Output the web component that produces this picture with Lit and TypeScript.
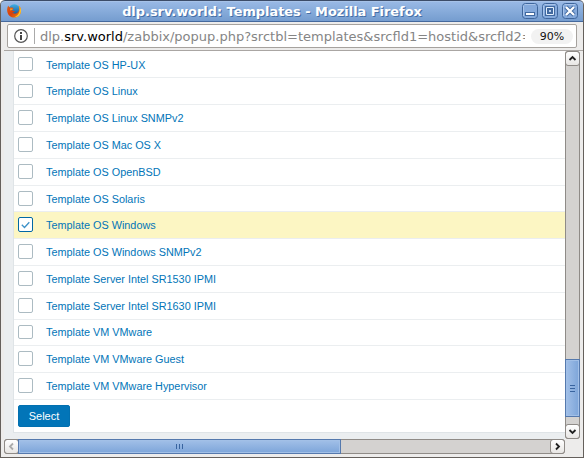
import { LitElement, html, css, svg } from "lit";
import { customElement } from "lit/decorators.js";
import { classMap } from "lit/directives/class-map.js";
import { styleMap } from "lit/directives/style-map.js";

interface Row { name: string; height: number; checked?: boolean; boxTop?: number; boxHeight?: number; textTop?: number; }

const ROWS: Row[] = [
  { name: "Template OS HP-UX", height: 27, boxTop: 6, boxHeight: 14, textTop: 8 },
  { name: "Template OS Linux", height: 27, boxTop: 6, boxHeight: 14 },
  { name: "Template OS Linux SNMPv2", height: 27 },
  { name: "Template OS Mac OS X", height: 27 },
  { name: "Template OS OpenBSD", height: 27 },
  { name: "Template OS Solaris", height: 26 },
  { name: "Template OS Windows", height: 27, checked: true },
  { name: "Template OS Windows SNMPv2", height: 27 },
  { name: "Template Server Intel SR1530 IPMI", height: 27 },
  { name: "Template Server Intel SR1630 IPMI", height: 27 },
  { name: "Template VM VMware", height: 26, boxHeight: 14, textTop: 6 },
  { name: "Template VM VMware Guest", height: 27 },
  { name: "Template VM VMware Hypervisor", height: 27 },
];

const firefox = svg`
  <defs>
    <linearGradient id="globe" x1="0" y1="0" x2="0" y2="1"><stop offset="0" stop-color="#3fb0e4"/><stop offset="1" stop-color="#174a8c"/></linearGradient>
    <linearGradient id="fox" x1="0" y1="0" x2="1" y2="1"><stop offset="0" stop-color="#e05a10"/><stop offset=".5" stop-color="#d8400c"/><stop offset="1" stop-color="#e88a18"/></linearGradient>
  </defs>
  <circle cx="7.300" cy="6" r="5.800" fill="url(#globe)"/>
  <path d="M1.200 1.600C.1 4 0 6 .3 7.800C1 11.500 4 13.600 7.300 13.600C11.300 13.600 14 10.500 14 7C14 4.500 13.200 2.600 11.700 1.500C12.500 4 12.500 6.500 11 8.300C9.500 10.200 6.500 10 5.300 8.300C6.500 8.600 7.500 8 8 7.300C6.500 7 5 7 5 5.800L6.700 4.600C6 3.600 4.500 3.400 3.400 3.700C2.300 3.200 1.500 2.500 1.200 1.600Z" fill="url(#fox)"/>
  <path d="M11.700 1.500C14.300 3.600 14.600 7.500 13.200 10C12 12.200 9.500 13.500 7 13.300C10.500 12 12.700 9 12.500 5.500C12.500 4 12.200 2.500 11.700 1.500Z" fill="#fbc52d"/>
  <path d="M3.200 4.300L6.300 4.700L5 5.900L3 6.500Z" fill="#f49a25"/>`;

@customElement("app-root")
export class AppRoot extends LitElement {
  static styles = css`
    :host { display: block; width: 584px; height: 458px; overflow: hidden; font-family: "Liberation Sans", Arial, sans-serif; }
    * { box-sizing: border-box; }
    svg { display: block; flex: none; }
    .window { display: flex; flex-direction: column; height: 458px; background: #edeceb; border: 1px solid #65605c; border-top: 0; border-radius: 5px 5px 0 0; overflow: hidden; }
    .title { display: flex; align-items: center; height: 22px; flex: none; margin: 0 -1px; padding: 0 5px 0 6px; background: linear-gradient(#9abae6, #759dcf); border: 1px solid #466a9e; border-top-color: #3c4c68; border-radius: 5px 5px 0 0; box-shadow: inset 0 1px #a6c2e8; }
    .caption { flex: 1; padding-top: 1px; text-align: center; white-space: nowrap; color: #fff; font: bold 12.900px/18px "DejaVu Sans", sans-serif; text-shadow: 1px 1px #456fa7; }
    .controls { display: flex; gap: 4px; }
    .url { display: flex; align-items: center; flex: none; width: 570px; height: 24px; margin: 2px 0 0 6px; padding: 0 3px 0 6px; background: #fff; border: 1px solid #a6a29e; border-radius: 2px; }
    .rule { width: 1px; height: 16px; background: #aaa; margin: 0 5px 0 6px; }
    .address { width: 485px; padding-top: 1px; overflow: hidden; white-space: nowrap; color: #858585; font: 13px/20px "DejaVu Sans", sans-serif; }
    .address b { font-weight: normal; color: #000; }
    .zoom { width: 42px; height: 15px; margin-left: auto; border-radius: 8px; background: #f2f2f2; color: #111; text-align: center; font: 11px/15px "DejaVu Sans", sans-serif; }
    .view { display: grid; grid-template-columns: 561px 15px; grid-template-rows: 388px 15px; margin: 2px 0 0 3px; border-top: 1px solid #aaa6a3; }
    .page { padding-left: 9px; background: #ebeef0; overflow: hidden; }
    .list { height: 382px; background: #fff; border-left: 1px solid #dfe4e7; border-bottom: 1px solid #dfe4e7; }
    .row { display: flex; align-items: flex-start; padding: 0 0 0 4px; border-bottom: 1px solid #ebeef0; color: #0275b8; font-size: 10.850px; line-height: 13px; }
    .picked { background: #fcf6c3; }
    .check { display: grid; place-items: center; width: 15px; margin-right: 13px; border: 1px solid #acbbc2; border-radius: 2px; background: #fff; }
    .picked .check { border-color: #0268a5; }
    .select { display: block; width: 52px; height: 22px; margin: 5px 0 0 4px; padding: 0; border: 1px solid #0270b0; border-radius: 2px; background: #0275b8; color: #fff; font: 11px/20px "Liberation Sans", sans-serif; }
    .bar { display: flex; background: #d4d2d0; border: 1px solid #8f8b87; border-radius: 3px; }
    .vertical { flex-direction: column; height: 388px; }
    .horizontal { height: 15px; width: 561px; }
    .arrow { display: grid; place-items: center; flex: none; width: 13px; height: 13px; background: linear-gradient(#fff, #e8e6e4); outline: 1px solid #8f8b87; border-radius: 2px; }
    .thumb { display: grid; place-items: center; border: 1px solid #5579ad; box-shadow: inset 0 0 0 1px #a2c0e7; }
    .vertical .thumb { width: 15px; height: 58px; margin: 294px 0 auto -1px; background: linear-gradient(90deg, #a2c0e8, #7da5d9); }
    .horizontal .thumb { width: 323px; height: 15px; margin: -1px auto 0 0; background: linear-gradient(#a2c0e8, #7da5d9); }
  `;

  private arrow(angle: number, color = "#222") {
    return html`<span class="arrow"><svg width="9" height="9" viewBox="-4.5 -4.5 9 9"><path transform="rotate(${angle})" d="M-3 1.500L0 -1.500L3 1.500" fill="none" stroke=${color} stroke-width="1.800"/></svg></span>`;
  }

  private control(glyph: unknown) {
    return html`<svg width="16" height="16"><rect x=".5" y=".5" width="15" height="15" rx="3" fill="#84a9db" stroke="#3f669c"/><path d="M2.500 1.500H13.500M1.500 2.500V13" stroke="#a9c4e9"/>${glyph}</svg>`;
  }

  render() {
    return html`<div class="window">
      <header class="title">
        <svg width="15" height="14" viewBox="0 0 15 14">${firefox}</svg>
        <span class="caption">dlp.srv.world: Templates - Mozilla Firefox</span>
        <div class="controls">
          ${this.control(svg`<rect x="3.500" y="9.500" width="9" height="3" fill="#fff" stroke="#41699f"/>`)}
          ${this.control(svg`<path d="M4.500 4.500H11.500V11.500H4.500Z" fill="none" stroke="#41699f" stroke-width="3"/><path d="M4.500 4.500H11.500V11.500H4.500Z" fill="none" stroke="#e3effc"/><rect x="6.500" y="6.500" width="3" height="3" fill="#b9d0ee" stroke="#41699f"/>`)}
          ${this.control(svg`<path d="M4 4L12 12M12 4L4 12" stroke="#41699f" stroke-width="4"/><path d="M4 4L12 12M12 4L4 12" stroke="#fff" stroke-width="2.300"/>`)}
        </div>
      </header>
      <div class="url">
        <svg width="14" height="14"><circle cx="7" cy="7" r="6.300" fill="none" stroke="#555" stroke-width="1.200"/><path d="M7 3V5M7 6V11" stroke="#444" stroke-width="2"/></svg>
        <i class="rule"></i>
        <span class="address">dlp.<b>srv.world</b>/zabbix/popup.php?srctbl=templates&amp;srcfld1=hostid&amp;srcfld2=</span>
        <span class="zoom">90%</span>
      </div>
      <main class="view">
        <section class="page"><div class="list">
          ${ROWS.map((r) => html`<div class=${classMap({ row: true, picked: !!r.checked })} style=${styleMap({ height: `${r.height}px` })}>
            <span class="check" style=${styleMap({ marginTop: `${r.boxTop ?? 5}px`, height: `${r.boxHeight ?? 15}px` })}>${r.checked ? html`<svg width="9" height="8"><path d="M.8 3.800L3.500 6.500L8.300 1.300" fill="none" stroke="#3d92c8" stroke-width="1.300"/></svg>` : ""}</span><span style=${styleMap({ marginTop: `${r.textTop ?? 7}px` })}>${r.name}</span></div>`)}
          <button class="select">Select</button>
        </div></section>
        <div class="bar vertical">${this.arrow(0)}
          <span class="thumb"><svg width="5" height="7"><path d="M0 .5H5M0 3.500H5M0 6.500H5" stroke="#38649f"/></svg></span>
          ${this.arrow(180)}</div>
        <div class="bar horizontal">${this.arrow(-90, "#aaa")}
          <span class="thumb"><svg width="7" height="5"><path d="M.5 0V5M3.500 0V5M6.500 0V5" stroke="#38649f"/></svg></span>${this.arrow(90)}</div>
      </main>
    </div>`;
  }
}
